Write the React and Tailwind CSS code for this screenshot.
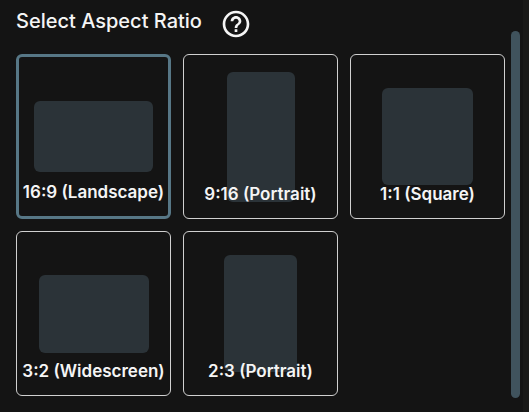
import { useState } from "react";

const RATIOS = [
  { id: "16:9", label: "16:9 (Landscape)", shape: "w-[119px] h-[71px]" },
  { id: "9:16", label: "9:16 (Portrait)", shape: "w-[68px] h-[130px]" },
  { id: "1:1", label: "1:1 (Square)", shape: "w-[91px] h-[97px]" },
  { id: "3:2", label: "3:2 (Widescreen)", shape: "w-[110px] h-[78px]" },
  { id: "2:3", label: "2:3 (Portrait)", shape: "w-[73px] h-[117px]" },
];

function HelpIcon() {
  return (
    <svg viewBox="0 0 24 24" className="size-8" fill="currentColor" aria-hidden="true">
      <path d="M11 18h2v-2h-2v2zm1-16C6.48 2 2 6.48 2 12s4.48 10 10 10 10-4.48 10-10S17.520 2 12 2zm0 18c-4.410 0-8-3.590-8-8s3.590-8 8-8 8 3.590 8 8-3.590 8-8 8zm0-14c-2.210 0-4 1.790-4 4h2c0-1.100.9-2 2-2s2 .9 2 2c0 2-3 1.750-3 5h2c0-2.250 3-2.500 3-5 0-2.210-1.790-4-4-4z" />
    </svg>
  );
}

function RatioCard({ ratio, selected, onSelect }) {
  return (
    <button
      type="button"
      aria-pressed={selected}
      onClick={() => onSelect(ratio.id)}
      className={`grid h-[165px] min-w-0 rounded-md text-[#f5f5f5] ${
        selected ? "border-3 border-[#577786]" : "border border-[#d0d0d0]"
      }`}
    >
      {/* Shape and label share one grid cell so tall shapes run under the text */}
      <span
        className={`col-start-1 row-start-1 place-self-center rounded-md bg-[#2b3338] ${ratio.shape}`}
      />
      <span className="col-start-1 row-start-1 mb-3 self-end justify-self-center whitespace-nowrap text-[17px] leading-6 font-semibold">
        {ratio.label}
      </span>
    </button>
  );
}

export default function App() {
  const [selected, setSelected] = useState("16:9");

  return (
    <div className="min-h-screen bg-[#191918] pr-1.5 font-['Inter',sans-serif]">
      <main className="flex min-h-screen bg-[#141414] pr-[3px]">
        <section className="min-w-0 flex-1 pl-4 pr-1.5 pt-2">
          <header className="flex h-[46px] items-start gap-[18px] text-[#f5f5f5]">
            <h1 className="text-[20px] leading-[26px] font-medium">Select Aspect Ratio</h1>
            <button type="button" aria-label="About aspect ratios">
              <HelpIcon />
            </button>
          </header>
          <div className="grid grid-cols-3 gap-3 pb-4">
            {RATIOS.map((ratio) => (
              <RatioCard
                key={ratio.id}
                ratio={ratio}
                selected={selected === ratio.id}
                onSelect={setSelected}
              />
            ))}
          </div>
        </section>
        {/* Scrollbar thumb */}
        <div className="mt-[31px] mb-3.5 w-[9px] rounded-full bg-[#40535d]" />
      </main>
    </div>
  );
}
